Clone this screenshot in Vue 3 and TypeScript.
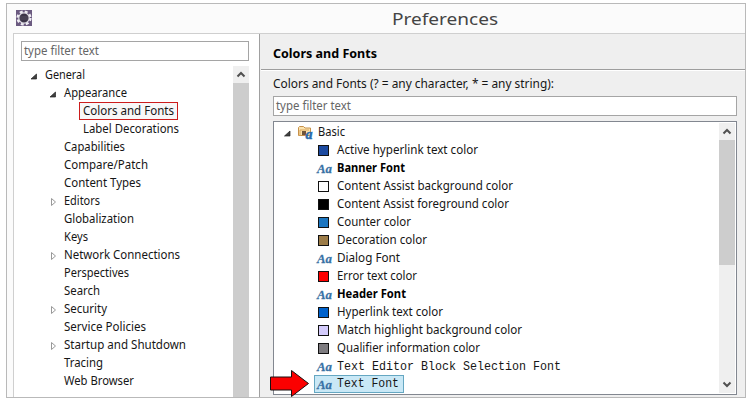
<script setup lang="ts">
type Arrow = 'open' | 'closed' | 'none'

interface TreeNode {
  label: string
  level: number
  arrow: Arrow
  width: number
  current?: boolean
}

interface Entry {
  label: string
  width: number
  color?: string
  bold?: boolean
  mono?: boolean
  selected?: boolean
}

const pages: TreeNode[] = [
  { label: 'General', level: 0, arrow: 'open', width: 40 },
  { label: 'Appearance', level: 1, arrow: 'open', width: 63 },
  { label: 'Colors and Fonts', level: 2, arrow: 'none', width: 91, current: true },
  { label: 'Label Decorations', level: 2, arrow: 'none', width: 96 },
  { label: 'Capabilities', level: 1, arrow: 'none', width: 61 },
  { label: 'Compare/Patch', level: 1, arrow: 'none', width: 84 },
  { label: 'Content Types', level: 1, arrow: 'none', width: 77 },
  { label: 'Editors', level: 1, arrow: 'closed', width: 36 },
  { label: 'Globalization', level: 1, arrow: 'none', width: 70 },
  { label: 'Keys', level: 1, arrow: 'none', width: 24 },
  { label: 'Network Connections', level: 1, arrow: 'closed', width: 116 },
  { label: 'Perspectives', level: 1, arrow: 'none', width: 65 },
  { label: 'Search', level: 1, arrow: 'none', width: 36 },
  { label: 'Security', level: 1, arrow: 'closed', width: 43 },
  { label: 'Service Policies', level: 1, arrow: 'none', width: 82 },
  { label: 'Startup and Shutdown', level: 1, arrow: 'closed', width: 122 },
  { label: 'Tracing', level: 1, arrow: 'none', width: 39 },
  { label: 'Web Browser', level: 1, arrow: 'none', width: 70 },
]

const entries: Entry[] = [
  { label: 'Active hyperlink text color', width: 141, color: '#1c4aa0' },
  { label: 'Banner Font', width: 68, bold: true },
  { label: 'Content Assist background color', width: 176, color: '#ffffff' },
  { label: 'Content Assist foreground color', width: 172, color: '#000000' },
  { label: 'Counter color', width: 74, color: '#1c76c0' },
  { label: 'Decoration color', width: 90, color: '#9c7c48' },
  { label: 'Dialog Font', width: 63 },
  { label: 'Error text color', width: 80, color: '#fc0000' },
  { label: 'Header Font', width: 69, bold: true },
  { label: 'Hyperlink text color', width: 106, color: '#0062cc' },
  { label: 'Match highlight background color', width: 185, color: '#d4ccfc' },
  { label: 'Qualifier information color', width: 143, color: '#7e7c80' },
  { label: 'Text Editor Block Selection Font', width: 224, mono: true },
  { label: 'Text Font', width: 62, mono: true, selected: true },
]
</script>

<template>
  <div class="window">
    <header class="titlebar">
      <svg class="app-icon" width="16" height="16" viewBox="0 0 16 16">
        <rect width="16" height="16" fill="#6b5a80" />
        <circle cx="8" cy="8" r="6.2" fill="none" stroke="#efedf3" stroke-width="2.8" stroke-dasharray="2.8 2.07" />
        <circle cx="8" cy="8" r="5.2" fill="#3c3548" stroke="#e3e0e8" stroke-width="1.2" />
        <path d="M4 7h8M4 9h8" stroke="#5c5668" stroke-width=".8" />
      </svg>
      <svg class="title" width="112" height="24"><text x="0" y="17.5" textLength="106" lengthAdjust="spacingAndGlyphs">Preferences</text></svg>
    </header>

    <div class="body">
      <aside class="nav">
        <div class="filter">
          <svg width="90" height="18"><text x="2" y="13" textLength="75" lengthAdjust="spacingAndGlyphs">type filter text</text></svg>
        </div>
        <div class="nav-scroll">
          <ul class="tree">
            <li v-for="p in pages" :key="p.label" :class="['row', `level-${p.level}`]">
              <svg class="twisty" width="9" height="10" viewBox="0 0 9 10">
                <path v-if="p.arrow === 'open'" d="M7.500 3v5H2z" fill="#404040" stroke="#222" stroke-width=".7" />
                <path v-else-if="p.arrow === 'closed'" d="M3.500 1.500v7l4-3.500z" fill="#fff" stroke="#999" />
              </svg>
              <span :class="['label', { current: p.current }]">
                <svg :width="p.width + 2" height="18"><text x="0" y="13" :textLength="p.width" lengthAdjust="spacingAndGlyphs">{{ p.label }}</text></svg>
              </span>
            </li>
          </ul>
          <div class="scrollbar">
            <svg class="scroll-button" width="16" height="17" viewBox="0 0 16 17"><path d="M4.500 10.500 8 7l3.500 3.500" /></svg>
            <div class="thumb"></div>
          </div>
        </div>
      </aside>

      <main class="page">
        <h1 class="page-title">
          <svg width="110" height="20"><text x="0" y="14" textLength="104" lengthAdjust="spacingAndGlyphs">Colors and Fonts</text></svg>
        </h1>
        <div class="page-content">
          <svg class="hint" width="290" height="18"><text x="0" y="13" textLength="281" lengthAdjust="spacingAndGlyphs">Colors and Fonts (? = any character, * = any string):</text></svg>
          <div class="filter">
            <svg width="90" height="18"><text x="2" y="13" textLength="75" lengthAdjust="spacingAndGlyphs">type filter text</text></svg>
          </div>
          <div class="list">
            <ul class="entries">
              <li class="group">
                <svg class="twisty" width="9" height="10" viewBox="0 0 9 10"><path d="M7 3v5H1.500z" fill="#404040" stroke="#222" stroke-width=".7" /></svg>
                <svg class="folder" width="17" height="16" viewBox="0 0 17 16">
                  <path d="M.5 10.500v-8l1-1h4l1.500 1.500h5.500v7.500z" fill="#fbe3ae" stroke="#c7914a" />
                  <path d="M2 11V5h9" fill="none" stroke="#d9a55c" />
                  <rect x="4" y="6" width="4" height="4" fill="#70543a" />
                  <text class="folder-a" x="7.500" y="14">a</text>
                </svg>
                <svg class="group-label" width="30" height="18"><text x="0" y="13" textLength="27" lengthAdjust="spacingAndGlyphs">Basic</text></svg>
              </li>
              <li v-for="e in entries" :key="e.label" :class="['entry', { bold: e.bold, mono: e.mono, selected: e.selected }]">
                <span class="marker">
                  <span v-if="e.color" class="swatch" :style="{ background: e.color }"></span>
                  <svg v-else width="16" height="16"><text class="aa" x="0" y="13" textLength="15" lengthAdjust="spacingAndGlyphs">Aa</text></svg>
                </span>
                <svg class="name" :width="e.width + 3" height="18"><text x="0" y="13" :textLength="e.width" lengthAdjust="spacingAndGlyphs">{{ e.label }}</text></svg>
              </li>
            </ul>
            <div class="scrollbar">
              <svg class="scroll-button" width="16" height="17" viewBox="0 0 16 17"><path d="M4.500 10.500 8 7l3.500 3.500" /></svg>
              <div class="thumb"></div>
              <svg class="scroll-button bottom" width="16" height="17" viewBox="0 0 16 17"><path d="M4.500 6.500 8 10l3.500-3.500" /></svg>
            </div>
          </div>
        </div>
      </main>
    </div>

    <svg class="pointer" width="41" height="29" viewBox="0 0 41 29">
      <path d="M1.500 8h21V1.500L39.500 14.500 22.500 27.500V21h-21z" fill="#fb0000" stroke="#181010" />
    </svg>
  </div>
</template>

<style>
body {
  background: #fff;
  overflow: hidden;
}
</style>

<style scoped>
* {
  box-sizing: border-box;
}

.window {
  position: relative;
  width: 740px;
  height: 395px;
  margin: 3px 0 0 6px;
  border: 1px solid #b9b9b9;
  background: #fbfbfb;
  color: #161616;
  font: 13px 'Noto Sans', 'Open Sans', sans-serif;
  display: flex;
  flex-direction: column;
}

svg {
  display: block;
  flex: none;
  overflow: visible;
}

text {
  fill: currentColor;
}

ul {
  list-style: none;
  margin: 0;
  padding: 0;
}

.titlebar {
  height: 29px;
  flex: none;
  display: flex;
  align-items: flex-start;
  padding: 6px 0 0 9px;
}

.title {
  margin-left: 360px;
  margin-top: -3px;
  font-size: 17px;
  color: #444;
}

.body {
  flex: 1;
  min-height: 0;
  margin-left: 6px;
  border-top: 1px solid #cfcfcf;
  border-left: 1px solid #cfcfcf;
  display: flex;
}

.nav {
  width: 245px;
  flex: none;
  padding: 7px 0 0 7px;
  background: #fff;
  display: flex;
  flex-direction: column;
}

.filter {
  height: 20px;
  flex: none;
  border: 1px solid #a5a5a5;
  background: #fff;
  color: #666;
}

.nav .filter {
  width: 228px;
}

.nav-scroll {
  flex: 1;
  min-height: 0;
  display: flex;
  justify-content: space-between;
  width: 228px;
  margin-top: 5px;
}

.row {
  height: 18px;
  display: flex;
  align-items: center;
}

.level-0 {
  padding-left: 8px;
}

.level-1 {
  padding-left: 27px;
}

.level-2 {
  padding-left: 46px;
}

.label {
  margin-left: 7px;
}

.twisty {
  margin-top: 2px;
}

.current {
  height: 18px;
  width: 99px;
  margin-left: 3px;
  padding-left: 3px;
  border: 1px solid #cc1c1c;
  background: #f7f7f7;
}

.current svg {
  margin-top: -1px;
}

.scrollbar {
  width: 16px;
  flex: none;
  background: #efefef;
  display: flex;
  flex-direction: column;
}

.scroll-button path {
  fill: none;
  stroke: #505050;
  stroke-width: 2;
}

.thumb {
  flex: 1;
  background: #cdcdcd;
}

.page {
  flex: 1;
  min-width: 0;
  border-left: 1px solid #a0a0a0;
  background: #efefef;
  display: flex;
  flex-direction: column;
}

.page-title {
  height: 36px;
  flex: none;
  margin: 0 0 0 1px;
  padding: 10px 0 0 12px;
  border-bottom: 1px solid #9d9d9d;
  box-shadow: 0 1px #fff;
  font-size: 13px;
  font-weight: 700;
  color: #000;
}

.page-content {
  flex: 1;
  min-height: 0;
  padding: 5px 8px 2px 13px;
  display: flex;
  flex-direction: column;
}

.hint {
  margin-bottom: 3px;
}

.list {
  flex: 1;
  min-height: 0;
  margin-top: 5px;
  padding: 1px 1px 1px 0;
  border: 1px solid #828790;
  background: #fff;
  display: flex;
  justify-content: space-between;
}

.list .thumb {
  flex: none;
  height: 125px;
}

.bottom {
  margin-top: auto;
}

.group {
  height: 18px;
  display: flex;
  align-items: center;
  padding-left: 9px;
}

.folder {
  margin: 2px 0 0 6px;
}

.folder-a {
  font: italic 700 14px 'Liberation Serif', serif;
  fill: #286cad;
  stroke: #286cad;
  stroke-width: 0.5px;
}

.group-label {
  margin-left: 3px;
}

.entry {
  height: 18px;
  display: flex;
  align-items: center;
  margin-left: 40px;
  padding-left: 3px;
}

.marker {
  width: 20px;
  flex: none;
}

.swatch {
  display: block;
  width: 11px;
  height: 11px;
  margin-left: 1px;
  border: 1px solid #111;
}

.aa {
  font: italic 700 13.5px 'Liberation Serif', serif;
  fill: #3972a5;
  stroke: #3972a5;
  stroke-width: 0.3px;
}

.bold {
  font-weight: 700;
  color: #000;
}

.mono {
  font-family: 'Liberation Mono', monospace;
  font-size: 12.5px;
}

.selected {
  width: 90px;
  padding-left: 2px;
  border: 1px solid #65a7c2;
  background: #c9e8f6;
}

.selected .name {
  margin-top: -2px;
}

.pointer {
  position: absolute;
  left: 262px;
  top: 365px;
}
</style>
